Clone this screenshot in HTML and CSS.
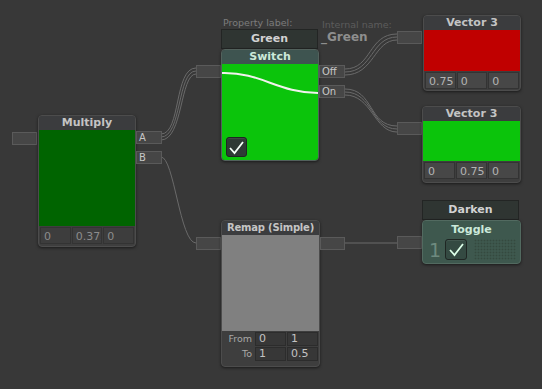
FILE: index.html
```html
<!DOCTYPE html>
<html lang="en">

<head>
    <meta charset="utf-8">
    <title>Node graph</title>
    <link rel="stylesheet" href="styles.css">
</head>

<body>
    <div class="canvas">
        <!-- wires behind the nodes -->
        <svg class="wires" width="542" height="389" viewBox="0 0 542 389">
            <g fill="none" stroke="#6a6a6a" stroke-width="1">
                <path d="M161,134 C181,134 174,68 196,68" />
                <path d="M161,137 C182,137 177,71 196,71" />
                <path d="M161,140 C183,140 180,74 196,74" />

                <path d="M161,157 C174,157 180,243 196,243" />

                <path d="M345,69 C372,69 368,34 397,34" />
                <path d="M345,72 C373,72 371,37 397,37" />
                <path d="M345,75 C374,75 374,40 397,40" />

                <path d="M345,89 C374,89 368,126 397,126" />
                <path d="M345,92 C373,92 371,129 397,129" />
                <path d="M345,95 C372,95 374,132 397,132" />

                <path d="M345,243 L397,243" />
            </g>
        </svg>

        <!-- Multiply -->
        <div class="socket" style="left:12px;top:132px"></div>
        <div class="node multiply">
            <div class="node-title">Multiply</div>
            <div class="swatch swatch-dark-green"></div>
            <div class="fields">
                <span class="field">0</span>
                <span class="field">0.375</span>
                <span class="field">0</span>
            </div>
        </div>
        <div class="socket out" style="left:136px;top:131px">A</div>
        <div class="socket out" style="left:136px;top:151px">B</div>

        <!-- Switch -->
        <div class="caption prop-caption">Property label:</div>
        <div class="caption name-caption">Internal name:</div>
        <div class="internal-name">_Green</div>
        <div class="label-box green-label">Green</div>
        <div class="socket" style="left:196px;top:65px"></div>
        <div class="node switch">
            <div class="node-title">Switch</div>
            <div class="swatch swatch-green">
                <svg class="switch-curve" width="97" height="96" viewBox="0 0 97 96">
                    <path d="M0,9 C40,8 55,29 97,29" fill="none" stroke="#f2f2ee" stroke-width="2" />
                </svg>
                <div class="check-box"><svg width="17" height="15" viewBox="0 0 17 15"><path d="M2,8 L6.5,13 L15,2" fill="none" stroke="#f4fff8" stroke-width="1.8" /></svg></div>
            </div>
        </div>
        <div class="socket out" style="left:319px;top:65px">Off</div>
        <div class="socket out" style="left:319px;top:85px">On</div>

        <!-- Vector 3 red -->
        <div class="socket" style="left:397px;top:31px"></div>
        <div class="node vector-red">
            <div class="node-title">Vector 3</div>
            <div class="swatch swatch-red"></div>
            <div class="fields">
                <span class="field">0.75</span>
                <span class="field">0</span>
                <span class="field">0</span>
            </div>
        </div>

        <!-- Vector 3 green -->
        <div class="socket" style="left:397px;top:122px"></div>
        <div class="node vector-green">
            <div class="node-title">Vector 3</div>
            <div class="swatch swatch-green"></div>
            <div class="fields">
                <span class="field">0</span>
                <span class="field">0.75</span>
                <span class="field">0</span>
            </div>
        </div>

        <!-- Remap -->
        <div class="socket" style="left:196px;top:237px"></div>
        <div class="node remap">
            <div class="node-title">Remap (Simple)</div>
            <div class="swatch swatch-gray"></div>
            <div class="range-row">
                <span class="range-label">From</span>
                <span class="field">0</span>
                <span class="field">1</span>
            </div>
            <div class="range-row">
                <span class="range-label">To</span>
                <span class="field">1</span>
                <span class="field">0.5</span>
            </div>
        </div>
        <div class="socket" style="left:320px;top:237px"></div>

        <!-- Toggle -->
        <div class="label-box darken-label">Darken</div>
        <div class="socket" style="left:397px;top:236px"></div>
        <div class="node toggle">
            <div class="node-title">Toggle</div>
            <div class="toggle-body">
                <span class="toggle-num">1</span>
                <div class="check-box"><svg width="17" height="15" viewBox="0 0 17 15"><path d="M2,8 L6.5,13 L15,2" fill="none" stroke="#dcffe8" stroke-width="1.8" /></svg></div>
                <div class="dots"></div>
            </div>
        </div>
    </div>
</body>

</html>
```

FILE: styles.css
```css
body {
    margin: 0;
    padding: 0;
    background-color: #383838;
    font-family: "DejaVu Sans", Verdana, sans-serif;
}

.canvas {
    position: relative;
    width: 542px;
    height: 389px;
    overflow: hidden;
}

.wires {
    position: absolute;
    left: 0;
    top: 0;
}

.node {
    position: absolute;
    box-sizing: border-box;
    display: flex;
    flex-direction: column;
    background-color: #3e3e3e;
    border: 1px solid #4c4c4c;
    border-radius: 4px;
    box-shadow: 0 1px 3px rgba(0, 0, 0, 0.55);
    overflow: hidden;
}

.node-title {
    height: 14px;
    line-height: 14px;
    text-align: center;
    white-space: nowrap;
    font-size: 11px;
    font-weight: bold;
    color: #c4c4c4;
    background-color: #3b3c3e;
}

.swatch {
    position: relative;
}

.swatch-dark-green {
    background-color: #006400;
    height: 96px;
}

.swatch-green {
    background-color: #0bc40b;
}

.swatch-red {
    background-color: #c00000;
    height: 41px;
}

.swatch-gray {
    background-color: #808080;
    height: 96px;
}

.fields {
    display: flex;
    gap: 1px;
    padding: 1px 1px 0;
}

.field {
    flex: 1;
    height: 17px;
    line-height: 17px;
    padding-left: 3px;
    overflow: hidden;
    white-space: nowrap;
    font-size: 11px;
    color: #b4b4b4;
    background-color: #474747;
    border: 1px solid #333;
    box-sizing: border-box;
}

.socket {
    position: absolute;
    box-sizing: border-box;
    width: 25px;
    height: 13px;
    background-color: #464646;
    border: 1px solid #5a5a5a;
    font-size: 10px;
    line-height: 11px;
    color: #c6c6c6;
    padding-left: 2px;
}

.socket.out {
    width: 26px;
}

/* Multiply */
.multiply {
    left: 38px;
    top: 115px;
    width: 98px;
    height: 132px;
}

.multiply .field {
    color: #8c8c8c;
    background-color: #3d3d3d;
}

/* captions */
.caption {
    position: absolute;
    font-size: 9.5px;
    color: #7c7c7c;
}

.prop-caption {
    left: 223px;
    top: 17px;
}

.name-caption {
    left: 322px;
    top: 19px;
    color: #5c5c5c;
}

.internal-name {
    position: absolute;
    left: 321px;
    top: 30px;
    font-size: 12px;
    font-weight: bold;
    color: #8e8e8e;
}

.label-box {
    position: absolute;
    box-sizing: border-box;
    height: 20px;
    line-height: 18px;
    text-align: center;
    font-size: 11px;
    font-weight: bold;
    color: #d2d2d2;
    background-color: #2f3532;
    border: 1px solid #232524;
}

.green-label {
    left: 221px;
    top: 29px;
    width: 97px;
}

.darken-label {
    left: 422px;
    top: 200px;
    width: 97px;
}

/* Switch */
.switch {
    left: 221px;
    top: 49px;
    width: 98px;
    height: 112px;
    border-color: #52615c;
}

.switch .node-title,
.toggle .node-title {
    background-color: #3e5450;
    color: #cbe9da;
}

.switch .swatch {
    flex: 1;
}

.switch-curve {
    position: absolute;
    left: 0;
    top: 0;
}

.check-box {
    box-sizing: border-box;
    width: 21px;
    height: 20px;
    display: flex;
    align-items: center;
    justify-content: center;
    background-color: #2e3a35;
    border: 1px solid #1f2623;
    border-radius: 3px;
    box-shadow: inset 0 1px 0 rgba(255, 255, 255, 0.08);
}

.switch .check-box {
    position: absolute;
    left: 4px;
    bottom: 3px;
}

/* Vector 3 */
.vector-red {
    left: 423px;
    top: 15px;
    width: 98px;
    height: 76px;
}

.vector-green {
    left: 422px;
    top: 106px;
    width: 99px;
    height: 77px;
}

.vector-green .swatch {
    height: 40px;
}

/* Remap */
.remap {
    left: 221px;
    top: 220px;
    width: 99px;
    height: 147px;
}

.remap .node-title {
    font-size: 10px;
    letter-spacing: -0.2px;
}

.range-row {
    display: flex;
    gap: 1px;
    padding: 1px 1px 0;
}

.range-row .field {
    flex: none;
    width: 31px;
    height: 14px;
    line-height: 12px;
    color: #c2c2c2;
    background-color: #373737;
    border-color: #2c2c2c;
}

.range-label {
    width: 31px;
    text-align: right;
    padding-right: 2px;
    font-size: 9.5px;
    line-height: 14px;
    color: #a8a8a8;
}

/* Toggle */
.toggle {
    left: 422px;
    top: 220px;
    width: 99px;
    height: 44px;
    background-color: #3e584e;
    border-color: #526a60;
}

.toggle .node-title {
    background-color: #3e584e;
    height: 17px;
    line-height: 17px;
}

.toggle-body {
    display: flex;
    align-items: center;
    gap: 2px;
    padding: 1px 0 0 6px;
}

.toggle-num {
    width: 14px;
    font-size: 19px;
    line-height: 20px;
    color: #6e8a7f;
}

.toggle .check-box {
    width: 22px;
    height: 21px;
    background-color: #344a42;
}

.dots {
    width: 42px;
    height: 21px;
    margin-left: 5px;
    background-image: radial-gradient(circle, #35493f 0.8px, transparent 1.1px);
    background-size: 3px 3px;
}
```
